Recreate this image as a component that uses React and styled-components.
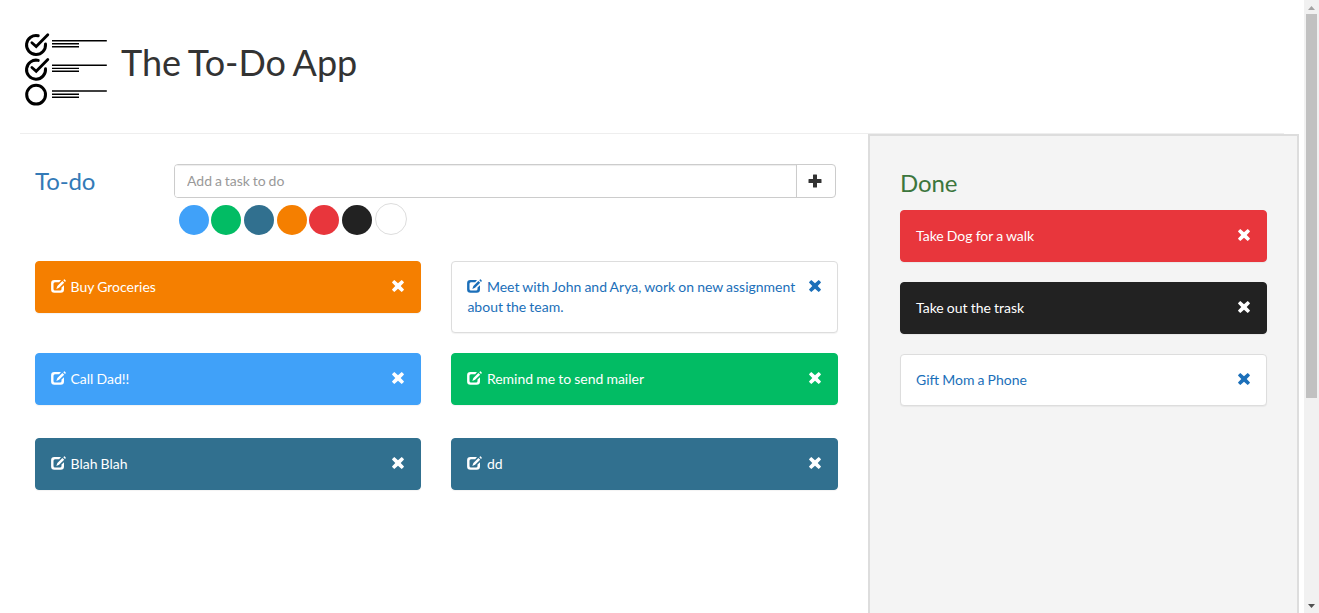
import React from 'react';
import styled, { createGlobalStyle } from 'styled-components';

const GlobalStyle = createGlobalStyle`
  *, *::before, *::after { box-sizing: border-box; }
  html, body { margin: 0; height: 100%; overflow: hidden; }
  body {
    font-family: Lato, "Liberation Sans", sans-serif;
    font-size: 14px;
    line-height: 20px;
    word-spacing: -0.5px;
    color: #333;
    background: #fff;
  }
  h1, h3, p { margin: 0; font-weight: 400; }
  button { font: inherit; color: inherit; background: none; border: 0; padding: 0; }
`;

const themes = {
  blue: { bg: '#40a1f9', border: '#40a1f9', fg: '#fff' },
  green: { bg: '#02bc64', border: '#02bc64', fg: '#fff' },
  teal: { bg: '#31708f', border: '#31708f', fg: '#fff' },
  orange: { bg: '#f57f00', border: '#f57f00', fg: '#fff' },
  red: { bg: '#e8363c', border: '#e8363c', fg: '#fff' },
  black: { bg: '#222', border: '#222', fg: '#fff' },
  white: { bg: '#fff', border: '#ddd', fg: '#1b6fb9' },
};

const Window = styled.div`
  display: flex;
  height: 100vh;
  overflow: hidden;
`;

const Page = styled.div`
  flex: 1;
  min-width: 0;
  display: flex;
  flex-direction: column;
  padding: 0 5px 0 20px;
`;

const Header = styled.header`
  display: flex;
  align-items: flex-start;
  height: 134px;
  margin-right: 15px;
  padding: 28px 0 0 3px;
  border-bottom: 1px solid #eee;
`;

const Logo = styled.svg`
  display: block;
  width: 88px;
  height: 82px;
`;

const Title = styled.h1`
  margin: 14px 0 0 10px;
  font-size: 36px;
  line-height: 40px;
  word-spacing: -1.4px;
`;

const Main = styled.main`
  flex: 1;
  min-height: 0;
  display: flex;
`;

const TodoColumn = styled.section`
  flex: 1;
  padding: 30px 30px 0 15px;
`;

const DoneColumn = styled.section`
  width: 431px;
  padding: 34px 30px 0;
  background: #f4f4f4;
  border: 2px solid #ddd;
  border-bottom: 0;
`;

const Heading = styled.h3`
  font-size: 24px;
  line-height: 26px;
  letter-spacing: -0.1px;
  color: ${(p) => p.$color};
`;

const AddRow = styled.div`
  display: flex;
  height: 97px;
`;

const AddHeading = styled.div`
  width: 139px;
  padding-top: 4px;
`;

const AddForm = styled.div`
  width: 662px;
`;

const InputGroup = styled.div`
  display: flex;
  height: 34px;
  border: 1px solid #ccc;
  border-radius: 4px;
  overflow: hidden;
`;

const TaskInput = styled.input`
  flex: 1;
  min-width: 0;
  padding: 0 12px;
  border: 0;
  outline: 0;
  font: inherit;
  word-spacing: -0.7px;
  box-shadow: inset 0 1px 1px rgba(0, 0, 0, 0.075);
  &::placeholder { color: #999; opacity: 1; }
`;

const AddButton = styled.button`
  display: flex;
  align-items: center;
  justify-content: center;
  width: 39px;
  padding-right: 2px;
  border-left: 1px solid #ccc;
`;

const Swatches = styled.div`
  display: flex;
  align-items: flex-end;
  gap: 2.68px;
  height: 37px;
  padding-left: 4.8px;
`;

const Swatch = styled.button`
  width: ${(p) => (p.$tone === 'white' ? 32 : 30)}px;
  height: ${(p) => (p.$tone === 'white' ? 32 : 30)}px;
  border-radius: 50%;
  background: ${(p) => themes[p.$tone].bg};
  border: ${(p) => (p.$tone === 'white' ? '1px solid #ddd' : '0')};
`;

const CardGrid = styled.div`
  display: grid;
  grid-template-columns: 386.4px 386.6px;
  grid-template-rows: 92px 85px 52px;
  column-gap: 30px;
  align-items: start;
`;

const DoneList = styled.div`
  display: flex;
  flex-direction: column;
  gap: 20px;
  margin-top: 14px;
`;

const CardBox = styled.article`
  display: flex;
  padding: 15px;
  border: 1px solid ${(p) => themes[p.$tone].border};
  border-radius: 4px;
  background: ${(p) => themes[p.$tone].bg};
  color: ${(p) => themes[p.$tone].fg};
  box-shadow: 0 1px 1px rgba(0, 0, 0, 0.05);
`;

const CardText = styled.p`
  flex: 1;
  min-width: 0;
  svg { margin-right: 4.5px; vertical-align: -1px; }
`;

const RemoveButton = styled.button`
  display: flex;
  width: 14px;
  height: 14px;
  margin-top: 2px;
`;

const Glyph = styled.svg`
  width: ${(p) => p.$w || 14}px;
  height: 14px;
  fill: currentColor;
`;

const Scrollbar = styled.div`
  display: flex;
  flex-direction: column;
  align-items: center;
  width: 15px;
  background: #f1f1f1;
`;

const ScrollThumb = styled.div`
  width: 11px;
  height: 384px;
  background: #c1c1c1;
`;

const ScrollArrow = styled.svg`
  display: block;
  width: 15px;
  height: 14px;
  fill: ${(p) => p.$color};
`;

const ScrollSpace = styled.div`
  flex: 1;
`;

const RemoveIcon = () => (
  <Glyph viewBox="0 0 14 14">
    <path d="M3.6 1.2 L7 4.3 L10.4 1.2 Q10.7 1 11 1.3 L12.8 3.1 Q13.1 3.4 12.8 3.7 L9.7 7 L12.8 10.3 Q13.1 10.6 12.8 10.9 L11 12.7 Q10.7 13 10.4 12.8 L7 9.7 L3.6 12.8 Q3.3 13 3 12.7 L1.2 10.9 Q.9 10.6 1.2 10.3 L4.3 7 L1.2 3.7 Q.9 3.4 1.2 3.1 L3 1.3 Q3.3 1 3.6 1.2Z" />
  </Glyph>
);

const EditIcon = () => (
  <Glyph $w={15} viewBox="0 0 15 14">
    <path d="M10 1 L8.2 3.2 H4 Q2.5 3.2 2.5 4.8 V10 Q2.5 11.6 4 11.6 H9 Q10.5 11.6 10.5 10 V8.5 L13 6.2 V10.5 Q13 13.8 9.7 13.8 H3.4 Q.1 13.8 .1 10.5 V4.3 Q.1 1 3.4 1Z" />
    <path d="M11.4 2 L13.2 3.8 L8.1 8.8 L5.3 9.9 L6.4 7Z" />
    <path d="M12.3 1.2 L13 .5 Q13.4 .2 13.8 .5 L14.7 1.4 Q15 1.8 14.7 2.2 L14 2.9Z" />
  </Glyph>
);

const PlusIcon = () => (
  <Glyph viewBox="0 0 14 14">
    <path d="M5.5 .5 H8.5 Q9 .5 9 1 V5 H13 Q13.5 5 13.5 5.5 V8.5 Q13.5 9 13 9 H9 V13 Q9 13.5 8.5 13.5 H5.5 Q5 13.5 5 13 V9 H1 Q.5 9 .5 8.5 V5.5 Q.5 5 1 5 H5 V1 Q5 .5 5.5 .5Z" />
  </Glyph>
);

function ChecklistLogo() {
  return (
    <Logo viewBox="23 28 88 82" fill="none" stroke="#000">
      {[44.9, 69.6].map((y) => (
        <g key={y} strokeLinecap="round" strokeWidth="3">
          <path d={`M38.2 ${y - 9.2} A9.5 9.5 0 1 0 45.5 ${y - 0.8}`} />
          <path d={`M31.9 ${y - 2.1} L36.2 ${y + 1.7} L47.8 ${y - 10.2}`} strokeWidth="2.8" />
        </g>
      ))}
      <circle cx="36.1" cy="94.7" r="9.4" strokeWidth="3" />
      <path d="M52 40.7 H106.8 M52 65.2 H106.8 M52 91 H106.8" strokeWidth="1.4" />
      <path d="M52 43.8 H79 M52 46.7 H79 M52 68.4 H79 M52 71.3 H79 M52 94.2 H79 M52 97.3 H79" strokeWidth="1.4" />
    </Logo>
  );
}

function Card({ tone, editable, children }) {
  return (
    <CardBox $tone={tone}>
      <CardText>
        {editable && <EditIcon />}
        {children}
      </CardText>
      <RemoveButton aria-label="Remove"><RemoveIcon /></RemoveButton>
    </CardBox>
  );
}

const todos = [
  ['orange', 'Buy Groceries'],
  ['white', 'Meet with John and Arya, work on new assignment about the team.'],
  ['blue', 'Call Dad!!'],
  ['green', 'Remind me to send mailer'],
  ['teal', 'Blah Blah'],
  ['teal', 'dd'],
];

const done = [
  ['red', 'Take Dog for a walk'],
  ['black', 'Take out the trask'],
  ['white', 'Gift Mom a Phone'],
];

export default function App() {
  return (
    <Window>
      <GlobalStyle />
      <Page>
        <Header>
          <ChecklistLogo />
          <Title>The To-Do App</Title>
        </Header>
        <Main>
          <TodoColumn>
            <AddRow>
              <AddHeading><Heading $color="#337ab7">To-do</Heading></AddHeading>
              <AddForm>
                <InputGroup>
                  <TaskInput placeholder="Add a task to do" />
                  <AddButton aria-label="Add"><PlusIcon /></AddButton>
                </InputGroup>
                <Swatches>
                  {Object.keys(themes).map((t) => <Swatch key={t} $tone={t} aria-label={t} />)}
                </Swatches>
              </AddForm>
            </AddRow>
            <CardGrid>
              {todos.map(([tone, text]) => <Card key={text} tone={tone} editable>{text}</Card>)}
            </CardGrid>
          </TodoColumn>
          <DoneColumn>
            <Heading $color="#3c763d">Done</Heading>
            <DoneList>
              {done.map(([tone, text]) => <Card key={text} tone={tone}>{text}</Card>)}
            </DoneList>
          </DoneColumn>
        </Main>
      </Page>
      <Scrollbar>
        <ScrollArrow $color="#a3a3a3" viewBox="0 0 15 14"><path d="M4 10 L7.5 6 L11 10Z" /></ScrollArrow>
        <ScrollThumb />
        <ScrollSpace />
        <ScrollArrow $color="#505050" viewBox="0 0 15 14"><path d="M4 5 L7.5 9 L11 5Z" /></ScrollArrow>
      </Scrollbar>
    </Window>
  );
}
